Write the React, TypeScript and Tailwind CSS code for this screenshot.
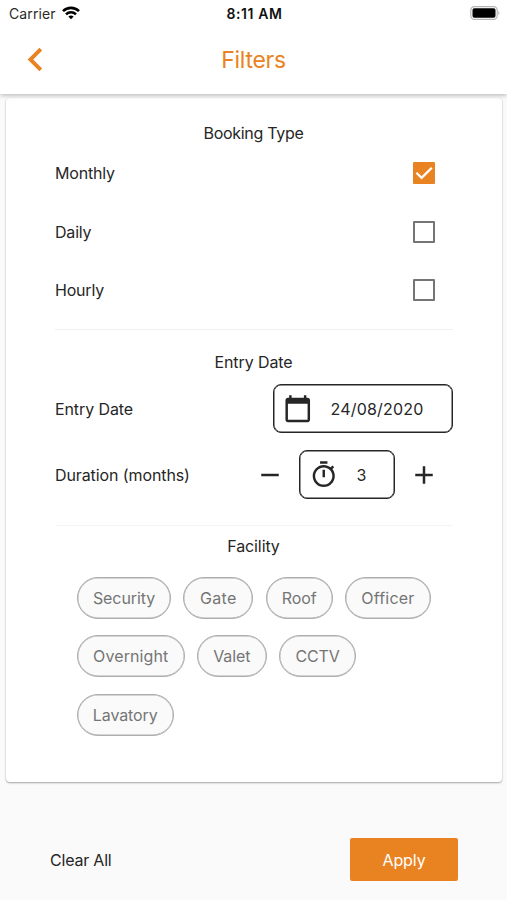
import React from "react";

function Glyph({ d, className }: { d: string; className: string }) {
  return (
    <svg viewBox="0 0 24 24" className={`shrink-0 ${className}`} fill="currentColor" aria-hidden="true">
      <path d={d} />
    </svg>
  );
}

const icons = {
  back: "M15.41 7.41L14 6l-6 6 6 6 1.41-1.41L10.83 12z",
  calendar:
    "M20 3h-1V1h-2v2H7V1H5v2H4c-1.1 0-2 .9-2 2v16c0 1.1.9 2 2 2h16c1.1 0 2-.9 2-2V5c0-1.1-.9-2-2-2zm0 18H4V8h16v13z",
  timer:
    "M15 1H9v2h6V1zm-4 13h2V8h-2v6zm8.03-6.61l1.42-1.42c-.43-.51-.9-.99-1.41-1.41l-1.42 1.42C16.07 4.74 14.12 4 12 4c-4.97 0-9 4.03-9 9s4.02 9 9 9 9-4.03 9-9c0-2.12-.74-4.07-1.97-5.61zM12 20c-3.87 0-7-3.13-7-7s3.13-7 7-7 7 3.13 7 7-3.13 7-7 7z",
  minus: "M19 13H5v-2h14v2z",
  plus: "M19 13h-6v6h-2v-6H5v-2h6V5h2v6h6v2z",
};

function StatusBar() {
  return (
    <div className="grid h-[27px] grid-cols-3 items-center pl-[9px] pr-[7px] text-black">
      <div className="flex items-center gap-[6px]">
        <span className="text-[14px] tracking-[0.1px] text-[#2a2a2a]">Carrier</span>
        <svg viewBox="0 0 18 14" className="-mt-[2px] h-[14px] w-[18px]" fill="none" stroke="#000" strokeWidth="2.6" aria-hidden="true">
          <path d="M1 5.2 C5.5 .7 12.500 .7 17 5.2" />
          <path d="M4 8.400 C6.800 5.600 11.200 5.600 14 8.400" />
          <path d="M6.300 10.500 Q9 8.400 11.700 10.500 L9 13.300 Z" fill="#000" stroke="none" />
        </svg>
      </div>
      <span className="-mr-[1px] -ml-[1px] text-center text-[14px] font-semibold tracking-[0.6px] text-[#111]">8:11 AM</span>
      <svg viewBox="0 0 30 14" className="-mt-[2px] h-[14px] w-[30px] justify-self-end" aria-hidden="true">
        <rect x=".8" y=".6" width="26.400" height="12.800" rx="3.600" fill="#fff" stroke="#b5b5b5" strokeWidth="1.200" />
        <rect x="2.500" y="2.300" width="23" height="9.400" rx="1.800" fill="#000" />
        <path d="M28.300 4.800 Q30.500 7 28.300 9.200 Z" fill="#b5b5b5" />
      </svg>
    </div>
  );
}

function CheckRow({ label, checked }: { label: string; checked?: boolean }) {
  return (
    <div className="flex h-[58.5px] items-center justify-between pr-[18px]">
      <span className="tracking-[-0.2px]">{label}</span>
      {checked ? (
        <span className="flex size-[22px] items-center justify-center rounded-[1px] bg-[#e98322]">
          <svg viewBox="0 0 22 22" className="size-[22px]" fill="none" stroke="#fff" strokeWidth="2.300" aria-hidden="true">
            <path d="M3.400 10.700 L8.600 15.800 L18.800 5.700" />
          </svg>
        </span>
      ) : (
        <span className="size-[22px] rounded-[1px] border-2 border-[#757575]" />
      )}
    </div>
  );
}

const chips = [
  ["Security", "w-[94px] tracking-[-0.1px]"],
  ["Gate", "w-[70px] tracking-[0.3px]"],
  ["Roof", "w-[67px] tracking-[-0.1px]"],
  ["Officer", "w-[86px] tracking-[0.2px]"],
  ["Overnight", "w-[107.500px] tracking-[0.1px]"],
  ["Valet", "w-[70px] tracking-[-0.1px]"],
  ["CCTV", "w-[77px] tracking-[-0.1px]"],
  ["Lavatory", "w-[96.500px] tracking-[-0.1px]"],
];

export default function App() {
  return (
    <div className="flex h-[900px] w-[507px] flex-col overflow-hidden bg-[#fafafa] font-[Inter,sans-serif] text-[16px] leading-[20px] text-[#262626]">
      <header className="z-10 h-[94px] shrink-0 bg-white shadow-[0_1px_5px_rgba(0,0,0,0.3)]">
        <StatusBar />
        <div className="grid h-[65px] grid-cols-[60px_1fr_60px] items-center text-[#e98322]">
          <Glyph d={icons.back} className="ml-[12px] size-[47px]" />
          <h1 className="text-center text-[23px] tracking-[-0.3px]">Filters</h1>
        </div>
      </header>

      <main className="ml-[6px] mr-[5px] mt-[4px] flex h-[684px] shrink-0 flex-col rounded-[4px] bg-white pl-[49px] pr-[49px] shadow-[0_1px_2px_rgba(0,0,0,0.35)]">
        <h2 className="-ml-[1px] mt-[25px] text-center tracking-[-0.3px]">Booking Type</h2>
        <div className="mt-[1px]">
          <CheckRow label="Monthly" checked />
          <CheckRow label="Daily" />
          <CheckRow label="Hourly" />
        </div>
        <hr className="mt-[9.500px] border-[#f0f0f0]" />

        <h2 className="-ml-[1px] mt-[22px] text-center tracking-[-0.1px]">Entry Date</h2>
        <div className="mt-[12px] flex h-[49px] items-center justify-between">
          <span className="tracking-[-0.1px]">Entry Date</span>
          <div className="flex h-[49px] w-[180px] items-center rounded-[8px] border border-[#262626] pl-[9px] shadow-[inset_0_0_0_0.5px_#262626]">
            <Glyph d={icons.calendar} className="size-[29.500px]" />
            <span className="ml-[18px] tracking-[0.2px]">24/08/2020</span>
          </div>
        </div>
        <div className="mt-[17px] flex h-[49px] items-center justify-between pr-[14px]">
          <span className="tracking-[-0.1px]">Duration (months)</span>
          <div className="flex items-center">
            <Glyph d={icons.minus} className="size-[30px]" />
            <div className="ml-[14px] flex h-[49px] w-[96px] items-center rounded-[8px] border border-[#262626] pl-[9px] shadow-[inset_0_0_0_0.5px_#262626]">
              <Glyph d={icons.timer} className="size-[29.500px]" />
              <span className="ml-[18px]">3</span>
            </div>
            <Glyph d={icons.plus} className="ml-[14px] size-[30px]" />
          </div>
        </div>
        <hr className="mt-[26px] border-[#f4f4f4]" />

        <h2 className="-ml-[1px] mt-[9.500px] text-center tracking-[-0.1px]">Facility</h2>
        <div className="ml-[22px] mt-[21px] flex flex-wrap gap-x-[12.300px] gap-y-[16.800px] text-[#757575]">
          {chips.map(([name, sizing]) => (
            <span
              key={name}
              className={`flex h-[42px] items-center justify-center rounded-full border border-[#adadad] bg-[#fafafa] shadow-[inset_0_0_0_0.4px_#adadad] ${sizing}`}
            >
              {name}
            </span>
          ))}
        </div>
      </main>

      <footer className="mt-[56px] flex h-[43px] items-center justify-between pl-[50px] pr-[49px]">
        <button className="tracking-[-0.2px]">Clear All</button>
        <button className="h-[43px] w-[108px] rounded-[2px] bg-[#e98322] tracking-[-0.1px] text-white">Apply</button>
      </footer>
    </div>
  );
}
